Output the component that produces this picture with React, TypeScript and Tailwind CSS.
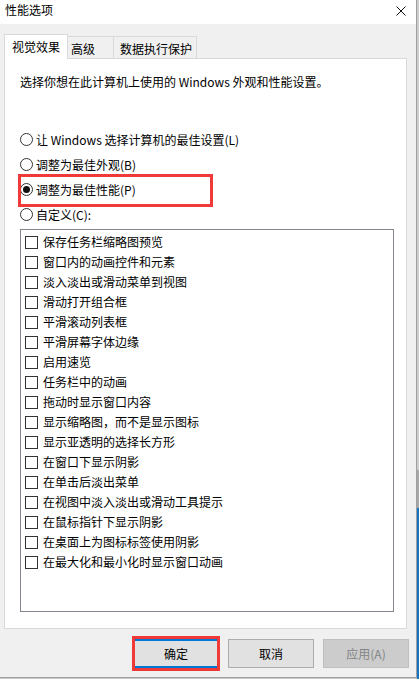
import React from "react";

const items = [
  "保存任务栏缩略图预览",
  "窗口内的动画控件和元素",
  "淡入淡出或滑动菜单到视图",
  "滑动打开组合框",
  "平滑滚动列表框",
  "平滑屏幕字体边缘",
  "启用速览",
  "任务栏中的动画",
  "拖动时显示窗口内容",
  "显示缩略图，而不是显示图标",
  "显示亚透明的选择长方形",
  "在窗口下显示阴影",
  "在单击后淡出菜单",
  "在视图中淡入淡出或滑动工具提示",
  "在鼠标指针下显示阴影",
  "在桌面上为图标标签使用阴影",
  "在最大化和最小化时显示窗口动画",
];

const radios = [
  { label: "让 Windows 选择计算机的最佳设置(L)", checked: false, boxed: false },
  { label: "调整为最佳外观(B)", checked: false, boxed: false },
  { label: "调整为最佳性能(P)", checked: true, boxed: true },
  { label: "自定义(C):", checked: false, boxed: false },
];

export default function App() {
  return (
    <div
      className="flex w-[419px] h-[679px] bg-[#c8c8c8] text-black overflow-hidden"
      style={{ fontFamily: '"Noto Sans CJK SC", "Noto Sans", sans-serif' }}
    >
      <div className="flex flex-col w-[417px] h-[678px] border-r border-b border-[#a0a0a0] bg-[#f0f0f0]">
        {/* title bar */}
        <div className="flex h-[24px] items-center justify-between bg-white pl-[5px] pr-[10px] pb-[4px]">
          <span className="text-[12px] leading-[16px]">性能选项</span>
          <svg width="10" height="10" viewBox="0 0 10 10" className="mt-[2px]">
            <path d="M0.5 0.5 L9.5 9.5 M9.5 0.5 L0.5 9.5" stroke="#111" strokeWidth="1" fill="none" />
          </svg>
        </div>

        {/* content */}
        <div className="flex flex-col px-[4px] pt-[10px]">
          {/* tabs */}
          <div className="relative z-10 mb-[-1px] flex items-end h-[25px]">
            <div className="flex h-[25px] w-[64px] items-center bg-white border border-b-0 border-[#d9d9d9] pl-[7px] text-[12px] leading-[16px]">
              视觉效果
            </div>
            <div className="mb-[1px] flex h-[22px] w-[46px] items-center border-t border-r border-[#d9d9d9] pl-[3px] pt-[2px] text-[12px] leading-[16px]">
              高级
            </div>
            <div className="mb-[1px] flex h-[22px] w-[83px] items-center border-t border-r border-[#d9d9d9] pl-[6px] pt-[2px] text-[12px] leading-[16px]">
              数据执行保护
            </div>
          </div>

          {/* panel */}
          <div className="w-[403px] h-[571px] bg-white border border-[#d9d9d9] pl-[15px]">
            <p className="pt-[15px] text-[12px] leading-[16px]">
              选择你想在此计算机上使用的 Windows 外观和性能设置。
            </p>
            <div className="mt-[37px] flex flex-col">
              {radios.map((r) => (
                <div key={r.label} className="relative flex h-[25px] items-center gap-[3px]">
                  <span className="flex h-[13px] w-[13px] items-center justify-center rounded-full border border-[#333] bg-white">
                    {r.checked && <span className="h-[7px] w-[7px] rounded-full bg-[#111]" />}
                  </span>
                  <span className="text-[12px] leading-[16px]">{r.label}</span>
                  {r.boxed && (
                    <span className="pointer-events-none absolute left-[-2px] top-[-3px] h-[33px] w-[195px] border-[3px] border-[#f03a3a]" />
                  )}
                </div>
              ))}
            </div>
            <div className="mt-[2px] flex h-[383px] w-[374px] flex-col border border-[#828790] pl-[4px] pt-[2px]">
              {items.map((t) => (
                <div key={t} className="flex h-[20px] items-center gap-[5px]">
                  <span className="h-[13px] w-[13px] border border-[#333] bg-white" />
                  <span className="text-[12px] leading-[16px] whitespace-nowrap">{t}</span>
                </div>
              ))}
            </div>
          </div>

          {/* buttons */}
          <div className="mt-[10px] flex gap-[9px] pl-[129px]">
            <div className="relative flex h-[29px] w-[86px] items-center justify-center border-2 border-[#0078d7] bg-[#e1e1e1] text-[12px] leading-[16px]">
              确定
              <span className="pointer-events-none absolute left-[-3px] top-[-5px] h-[35px] w-[88px] border-[3px] border-[#f03a3a]" />
            </div>
            <div className="flex h-[29px] w-[86px] items-center justify-center border border-[#adadad] bg-[#e1e1e1] text-[12px] leading-[16px]">
              取消
            </div>
            <div className="flex h-[29px] w-[86px] items-center justify-center border border-[#bfbfbf] bg-[#cccccc] text-[12px] leading-[16px] text-[#838383]">
              应用(A)
            </div>
          </div>
        </div>
      </div>
      {/* background strip to the right */}
      <div className="flex w-[2px] flex-col">
        <div className="h-[470px] bg-[#cdcdcd]" />
        <div className="h-[38px] bg-[#a7a7a7]" />
        <div className="flex-1 bg-[#1672c4]" />
      </div>
    </div>
  );
}
